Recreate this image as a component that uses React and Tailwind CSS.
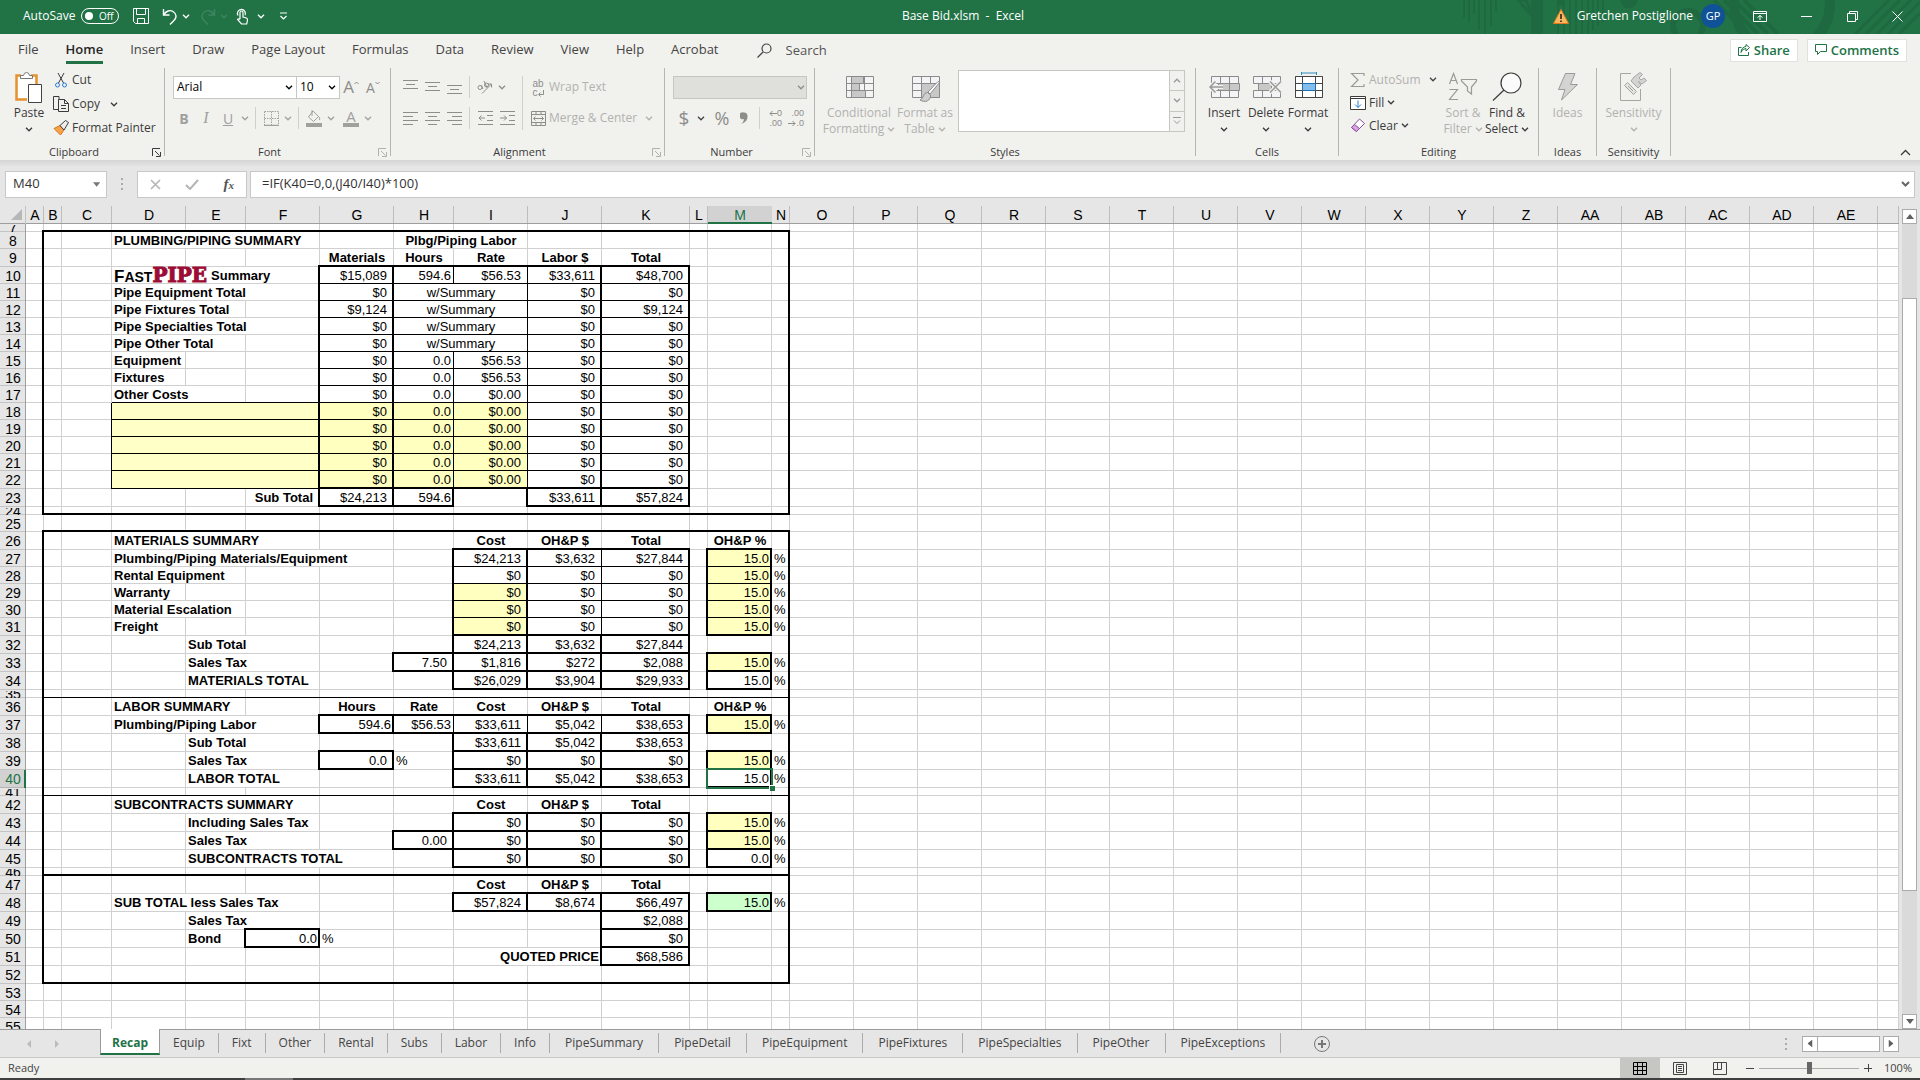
import React, { useState } from 'react'
import clsx from 'clsx'

const COLS = [
  ['A', 'w-[18px]'], ['B', 'w-[18px]'], ['C', 'w-[50px]'], ['D', 'w-[74px]'], ['E', 'w-[60px]'],
  ['F', 'w-[74px]'], ['G', 'w-[74px]'], ['H', 'w-[60px]'], ['I', 'w-[74px]'], ['J', 'w-[74px]'],
  ['K', 'w-[88px]'], ['L', 'w-[18px]'], ['M', 'w-[64px]'], ['N', 'w-[18px]'],
  ...['O', 'P', 'Q', 'R', 'S', 'T', 'U', 'V', 'W', 'X', 'Y', 'Z', 'AA', 'AB', 'AC', 'AD', 'AE'].map(c => [c, 'w-[64px]']),
  ['', ''],
]
const NAMES = COLS.map(c => c[0])
const col = name => NAMES.indexOf(name)

const FIRST_ROW = 7
const LAST_ROW = 55
const TALL = [9, 22, 23, 26, 31, 32, 33, 34, 36, 37, 38, 39, 40, 42, 43, 44, 45, 47, 48, 49, 50, 51, 52]
const TINY = [7, 24, 35, 41, 46]

// cell edges, key is right edge + bottom edge: n = none, g = grid line, t = thin, T = thick
const EDGES = {
  ng: 'shadow-[inset_0_-1px_0_#d0d0d0]',
  gg: 'shadow-[inset_-1px_-1px_0_#d0d0d0]',
  gt: 'shadow-[inset_0_-1px_0_#000,inset_-1px_0_0_#d0d0d0]',
  gT: 'shadow-[inset_0_-2px_0_#000,inset_-1px_0_0_#d0d0d0]',
  tg: 'shadow-[inset_-1px_0_0_#000,inset_0_-1px_0_#d0d0d0]',
  tt: 'shadow-[inset_-1px_-1px_0_#000]',
  tT: 'shadow-[inset_-1px_-2px_0_#000]',
  Tg: 'shadow-[inset_-2px_0_0_#000,inset_0_-1px_0_#d0d0d0]',
  Tt: 'shadow-[inset_-2px_-1px_0_#000]',
  TT: 'shadow-[inset_-2px_-2px_0_#000]',
}

const right = {}
const bottom = {}
const cells = {}

function vline(c, r1, r2, w){ for(let r = r1; r <= r2; r++) right[`${c}:${r}`] = w }
function hline(r, c1, c2, w){ for(let c = c1; c <= c2; c++) bottom[`${c}:${r}`] = w }
function box(a, r1, b, r2, w = 'T'){
  vline(col(a) - 1, r1, r2, w)
  vline(col(b), r1, r2, w)
  hline(r1 - 1, col(a), col(b), w)
  hline(r2, col(a), col(b), w)
}
function put(c, r, text, opts = {}){ cells[`${col(c)}:${r}`] = { text, ...opts } }

const label = (c, r, text, span = 1) => put(c, r, text, { span, bold: true, align: 'left' })
const head = (c, r, text, span = 1) => put(c, r, text, { span, bold: true, align: 'center' })
const money = (c, r, text, fill) => put(c, r, text, { align: 'money', fill })
const num = (c, r, text, fill) => put(c, r, text, { align: 'num', fill })

// outer frames
box('B', 8, 'N', 24)
box('B', 26, 'N', 52)
hline(35, col('B'), col('N'), 't')
hline(41, col('B'), col('N'), 't')
hline(46, col('B'), col('N'), 'T')

// plumbing / piping
for(let r = 10; r <= 21; r++) hline(r, col('G'), col('K'), 't')
vline(col('C'), 18, 22, 't')
for(let r = 17; r <= 22; r++) hline(r, col('D'), col('F'), 't')
box('G', 10, 'K', 22)
vline(col('H'), 10, 22, 't')
vline(col('I'), 10, 22, 't')
vline(col('G'), 10, 22, 'T')
vline(col('J'), 10, 22, 'T')
box('G', 23, 'H', 23)
vline(col('G'), 23, 23, 'T')
box('J', 23, 'K', 23)
vline(col('J'), 23, 23, 'T')
hline(22, col('I'), col('I'), 'T')

label('D', 8, 'PLUMBING/PIPING SUMMARY', 3)
head('H', 8, 'Plbg/Piping Labor', 2)
head('G', 9, 'Materials')
head('H', 9, 'Hours')
head('I', 9, 'Rate')
head('J', 9, 'Labor $')
head('K', 9, 'Total')
label('D', 10, <FastPipe />, 3)
label('D', 11, 'Pipe Equipment Total', 3)
label('D', 12, 'Pipe Fixtures Total', 2)
label('D', 13, 'Pipe Specialties Total', 3)
label('D', 14, 'Pipe Other Total', 2)
label('D', 15, 'Equipment')
label('D', 16, 'Fixtures')
label('D', 17, 'Other Costs', 2)
put('F', 23, 'Sub Total', { bold: true, align: 'money' })

const piping = [
  [10, '$15,089', '594.6', '$56.53', '$33,611', '$48,700'],
  [11, '$0', null, null, '$0', '$0'],
  [12, '$9,124', null, null, '$0', '$9,124'],
  [13, '$0', null, null, '$0', '$0'],
  [14, '$0', null, null, '$0', '$0'],
  [15, '$0', '0.0', '$56.53', '$0', '$0'],
  [16, '$0', '0.0', '$56.53', '$0', '$0'],
  [17, '$0', '0.0', '$0.00', '$0', '$0'],
  [18, '$0', '0.0', '$0.00', '$0', '$0'],
  [19, '$0', '0.0', '$0.00', '$0', '$0'],
  [20, '$0', '0.0', '$0.00', '$0', '$0'],
  [21, '$0', '0.0', '$0.00', '$0', '$0'],
  [22, '$0', '0.0', '$0.00', '$0', '$0'],
  [23, '$24,213', '594.6', '', '$33,611', '$57,824'],
]
piping.forEach(([r, g, h, i, j, k]) => {
  const fill = r >= 18 && r <= 22 ? 'yellow' : undefined
  money('G', r, g, fill)
  if(h === null) put('H', r, 'w/Summary', { span: 2, align: 'center' })
  else {
    num('H', r, h, fill)
    money('I', r, i, fill)
  }
  money('J', r, j)
  money('K', r, k)
  if(fill) put('D', r, '', { span: 3, fill: 'paleyellow' })
})

// cost blocks: I, J, K, then the OH&P % in M
for(let r = 27; r <= 31; r++){ hline(r, col('I'), col('K'), 't'); hline(r, col('M'), col('M'), 't') }
box('I', 27, 'K', 31)
vline(col('I'), 27, 31, 'T')
vline(col('J'), 27, 31, 't')
box('M', 27, 'M', 31)
;[32, 33, 34, 37, 38, 39, 40, 43, 44, 45, 48].forEach(r => { box('I', r, 'I', r); box('J', r, 'J', r); box('K', r, 'K', r) })
;[33, 34, 37, 39, 40, 43, 44, 45, 48].forEach(r => box('M', r, 'M', r))
;[49, 50, 51].forEach(r => box('K', r, 'K', r))
box('H', 33, 'H', 33)
box('G', 37, 'G', 37)
box('H', 37, 'H', 37)
vline(col('H'), 37, 37, 't')
vline(col('I'), 37, 37, 't')
vline(col('J'), 37, 37, 't')
box('G', 39, 'G', 39)
box('H', 44, 'H', 44)
box('F', 50, 'F', 50)
vline(col('E'), 49, 49, 'n')

const costs = [
  [27, '$24,213', '$3,632', '$27,844', '15.0'],
  [28, '$0', '$0', '$0', '15.0'],
  [29, '$0', '$0', '$0', '15.0'],
  [30, '$0', '$0', '$0', '15.0'],
  [31, '$0', '$0', '$0', '15.0'],
  [32, '$24,213', '$3,632', '$27,844'],
  [33, '$1,816', '$272', '$2,088', '15.0'],
  [34, '$26,029', '$3,904', '$29,933', '15.0'],
  [37, '$33,611', '$5,042', '$38,653', '15.0'],
  [38, '$33,611', '$5,042', '$38,653'],
  [39, '$0', '$0', '$0', '15.0'],
  [40, '$33,611', '$5,042', '$38,653', '15.0'],
  [43, '$0', '$0', '$0', '15.0'],
  [44, '$0', '$0', '$0', '15.0'],
  [45, '$0', '$0', '$0', '0.0'],
  [48, '$57,824', '$8,674', '$66,497', '15.0'],
]
costs.forEach(([r, cost, ohp, total, pct]) => {
  money('I', r, cost, r >= 29 && r <= 31 ? 'yellow' : undefined)
  money('J', r, ohp)
  money('K', r, total)
  if(pct){
    const plain = [34, 40, 45].includes(r)
    num('M', r, pct, plain ? undefined : r === 48 ? 'green' : 'yellow')
    put('N', r, '%', { align: 'left' })
  }
})
;[26, 36, 42, 47].forEach(r => { head('I', r, 'Cost'); head('J', r, 'OH&P $'); head('K', r, 'Total') })
head('M', 26, 'OH&P %')
head('M', 36, 'OH&P %')

label('D', 26, 'MATERIALS SUMMARY', 3)
label('D', 27, 'Plumbing/Piping Materials/Equipment', 4)
label('D', 28, 'Rental Equipment', 2)
label('D', 29, 'Warranty')
label('D', 30, 'Material Escalation', 2)
label('D', 31, 'Freight')
label('E', 32, 'Sub Total', 2)
label('E', 33, 'Sales Tax', 2)
label('E', 34, 'MATERIALS TOTAL', 2)
money('H', 33, '7.50')
label('D', 36, 'LABOR SUMMARY', 2)
head('G', 36, 'Hours')
head('H', 36, 'Rate')
label('D', 37, 'Plumbing/Piping Labor', 3)
num('G', 37, '594.6')
num('H', 37, '$56.53')
label('E', 38, 'Sub Total', 2)
label('E', 39, 'Sales Tax', 2)
money('G', 39, '0.0')
put('H', 39, '%', { align: 'left' })
label('E', 40, 'LABOR TOTAL', 2)
label('D', 42, 'SUBCONTRACTS SUMMARY', 3)
label('E', 43, 'Including Sales Tax', 2)
label('E', 44, 'Sales Tax', 2)
money('H', 44, '0.00')
label('E', 45, 'SUBCONTRACTS TOTAL', 3)
label('D', 48, 'SUB TOTAL less Sales Tax', 3)
label('E', 49, 'Sales Tax')
money('K', 49, '$2,088')
label('E', 50, 'Bond')
num('F', 50, '0.0')
put('G', 50, '%', { align: 'left' })
money('K', 50, '$0')
put('I', 51, 'QUOTED PRICE', { span: 2, bold: true, align: 'num' })
money('K', 51, '$68,586')

const ALIGN = {
  left: 'pl-[2px] text-left',
  center: 'text-center',
  money: 'pr-[7px] text-right',
  num: 'pr-[3px] text-right',
}
const FILL = { yellow: 'bg-[#ffffc0]', paleyellow: 'bg-[#ffffc8]', green: 'bg-[#ccffcc]' }

function FastPipe(){
  return (
    <span className="flex h-4 items-start gap-[4px]">
      <span className="flex items-baseline leading-[14px]">
        <span className="text-[17px]">F</span>
        <span className="text-[14px]">AST</span>
        <span className="font-['DejaVu_Serif',serif] text-[20px] font-black text-[#9c0c34] [-webkit-text-stroke:1px_#9c0c34]">PIPE</span>
      </span>
      <span>Summary</span>
    </span>
  )
}

function Cell({ r, c, data }){
  const last = c + (data?.span || 1) - 1
  const key = (right[`${last}:${r}`] || 'g') + (bottom[`${c}:${r}`] || 'g')
  const active = r === 40 && NAMES[c] === 'M'
  // a thick frame that starts below and to the right still needs its corner drawn here
  const corner = !key.includes('T') && right[`${last}:${r + 1}`] === 'T' && bottom[`${last + 1}:${r}`] === 'T'
  return (
    <td
      colSpan={data?.span || 1}
      className={clsx('p-0 whitespace-nowrap', EDGES[key], data?.bold && 'font-bold', ALIGN[data?.align], FILL[data?.fill], (active || corner) && 'relative')}
    >
      {data?.text}
      {corner && <span className="absolute right-0 bottom-0 h-[2px] w-[2px] bg-black" />}
      {active && (
        <span className="absolute -top-[2px] -right-[1px] -bottom-[1px] -left-[2px] border-2 border-[#217346]">
          <span className="absolute -right-[4px] -bottom-[4px] h-[6px] w-[6px] border-t border-l border-white bg-[#217346]" />
        </span>
      )}
    </td>
  )
}

function SheetRow({ r }){
  const tiny = TINY.includes(r)
  const height = tiny ? 'h-2' : TALL.includes(r) ? 'h-[18px]' : 'h-[17px]'
  const tds = []
  for(let c = 0; c < COLS.length;){
    const data = cells[`${c}:${r}`]
    tds.push(<Cell key={c} r={r} c={c} data={data} />)
    c += data?.span || 1
  }
  return (
    <tr className={clsx(height, tiny ? 'text-[1px] leading-[1px]' : 'leading-4')}>
      <th
        scope="row"
        className={clsx('p-0 text-[14px] font-normal',
          r === 40 ? 'bg-[#d2d2d2] text-[#217346] shadow-[inset_-2px_0_0_#217346,inset_0_-1px_0_#b4b4b4]' : 'bg-[#e6e6e6] shadow-[inset_-1px_0_0_#9e9e9e,inset_0_-1px_0_#c4c4c4]')}
      >
        <div className={clsx('flex items-center justify-center overflow-hidden', tiny ? 'h-[7px] leading-[7px]' : 'h-4 leading-4')}>{r}</div>
      </th>
      {tds}
    </tr>
  )
}

function Sheet(){
  const rows = []
  for(let r = FIRST_ROW; r <= LAST_ROW; r++) rows.push(r)
  return (
    <table className="w-full table-fixed border-separate border-spacing-0 bg-white font-['Liberation_Sans',sans-serif] text-[13px] text-black">
      <colgroup>
        <col className="w-[26px]" />
        {COLS.map(([name, w], i) => <col key={i} className={w} />)}
      </colgroup>
      <thead>
        <tr className="h-[18px] bg-[#e6e6e6] text-[14px] leading-4">
          <th className="p-0 shadow-[inset_-1px_0_0_#c4c4c4,inset_0_-1px_0_#9e9e9e]">
            <svg width="12" height="12" viewBox="0 0 12 12" className="ml-auto mr-[3px]"><path d="M11 0V11H0Z" fill="#b7b7b7" /></svg>
          </th>
          {COLS.map(([name], i) => (
            <th
              key={i}
              scope="col"
              className={clsx('p-0 text-center font-normal',
                name === 'M' ? 'bg-[#d2d2d2] text-[#217346] shadow-[inset_0_-2px_0_#217346]' : 'shadow-[inset_0_-1px_0_#9e9e9e,inset_-1px_0_0_#bdbdbd]')}
            >
              {name}
            </th>
          ))}
        </tr>
      </thead>
      <tbody>
        {rows.map(r => <SheetRow key={r} r={r} />)}
      </tbody>
    </table>
  )
}

function Chevron({ className }){
  return (
    <svg width="8" height="5" viewBox="0 0 8 5" className={clsx('shrink-0', className)} fill="none" stroke="currentColor" strokeWidth="1.3">
      <path d="M1 0.8L4 3.8L7 0.8" />
    </svg>
  )
}

function Svg({ w = 16, h = 16, className, children, ...rest }){
  return (
    <svg width={w} height={h} viewBox={`0 0 ${w} ${h}`} className={clsx('shrink-0', className)} fill="none" stroke="currentColor" strokeWidth="1" {...rest}>
      {children}
    </svg>
  )
}

function IconButton({ label, className, children }){
  return (
    <button aria-label={label} className={clsx('flex h-[22px] w-[22px] items-center justify-center', className)}>{children}</button>
  )
}

function Drop({ label, className }){
  return <IconButton label={label} className={clsx('!w-3', className)}><Chevron /></IconButton>
}

function BigButton({ icon, lines, drop, off, className }){
  return (
    <button className={clsx('flex flex-col items-center pt-[4px] leading-4', off && 'text-[#b1b1ae]', className)}>
      <span className="flex h-[33px] items-start justify-center">{icon}</span>
      <span className="whitespace-nowrap">{lines[0]}</span>
      <span className="flex h-4 items-center gap-[3px] whitespace-nowrap">{lines[1]}{drop && <Chevron />}</span>
    </button>
  )
}

function Group({ title, className, launcher, off, children }){
  return (
    <section className={clsx('flex h-[88px] shrink-0 flex-col border-r border-[#b5b5b2]', className)}>
      <div className="flex h-[76px] shrink-0">{children}</div>
      <div className={clsx('relative h-3 text-center text-[11px] leading-4', launcher && 'pr-4')}>
        {title}
        {launcher && (
          <button aria-label={`${title} settings`} className={clsx('absolute top-[4px] right-[3px]', off && 'text-[#b1b1ae]')}>
            <Svg w={9} h={9}><path d="M0.5 8V0.5H8M3 3L7.5 7.5M8.5 4V8.5H4" /></Svg>
          </button>
        )}
      </div>
    </section>
  )
}

const Sep = () => <span className="mx-[4px] h-[22px] w-px bg-[#cfcfcc]" />

function Lines({ rows }){
  return <Svg w={15} h={14}>{rows.map(([x, y, w]) => <path key={y} d={`M${x} ${y + 0.5}h${w}`} />)}</Svg>
}

function GridIcon({ kind }){
  return (
    <Svg w={32} h={32} stroke="#8b8b8b">
      {kind !== 'delete' && <path d="M3.5 4.5H30.5V25.5H3.5Z" fill="#f4f4f6" />}
      {kind === 'format' && <path d="M3.5 4.5H30.5V25.5H3.5ZM3.5 11.5H30.5M3.5 18.5H30.5M10.5 4.5V25.5M23.5 4.5V25.5" stroke="#444" fill="#fff" />}
      {kind === 'format' && <path d="M10.5 11.5H23.5V18.5H10.5Z" fill="#83beec" stroke="#1e6fb0" />}
      {kind === 'format' && <path d="M9.5 1H24.5M9.5 -1V3M24.5 -1V3" stroke="#2a8dc0" />}
      {kind !== 'format' && kind !== 'delete' && <path d="M3.5 11.5H30.5M3.5 18.5H30.5M12.5 4.5V25.5M21.5 4.5V25.5" />}
      {kind === 'cond' && <path d="M8.5 4.5H20.5V11.5H8.5ZM8.5 11.5H16.5V18.5H8.5ZM8.5 18.5H22.5V25.5H8.5Z" fill="#c8c8c8" />}
      {kind === 'insert' && <path d="M10.5 11.5H31.5V18.5H10.5ZM21.5 11.5V18.5" fill="#c8c8c8" />}
      {kind === 'insert' && <path d="M15 15H2M7.5 9.5L2 15L7.5 20.5" stroke="#f1f1ee" strokeWidth="4" />}
      {kind === 'insert' && <path d="M15 15H2M7.5 9.5L2 15L7.5 20.5" stroke="#9a9a9a" strokeWidth="1.5" />}
      {kind === 'delete' && <path d="M3.5 4.5H30.5V11.5H3.5ZM3.5 18.5H30.5V25.5H3.5ZM12.5 4.5V11.5M21.5 4.5V11.5M12.5 18.5V25.5M21.5 18.5V25.5" fill="#f4f4f6" />}
      {kind === 'delete' && <path d="M8.5 11.5H21.5V18.5H8.5Z" fill="#c8c8c8" />}
      {kind === 'delete' && <path d="M20 9.5L31 20.5M31 9.5L20 20.5" stroke="#f1f1ee" strokeWidth="4" />}
      {kind === 'delete' && <path d="M20 9.5L31 20.5M31 9.5L20 20.5" stroke="#9a9a9a" strokeWidth="1.5" />}
      {kind === 'table' && <path d="M12.5 11.5H30.5V25.5H12.5Z" fill="#c8c8c8" />}
      {kind === 'table' && <path d="M31 10L21 22L19 20L29 9.5Z" fill="#fff" />}
      {kind === 'table' && <path d="M18.5 20.5C14 21 15 26 11 28C16 31 22 29 21.5 23Z" fill="#d0d0d0" />}
    </Svg>
  )
}

function TitleBar(){
  return (
    <header className="relative flex h-[34px] shrink-0 items-center bg-[#217346] pb-[2px] text-[12px] text-white">
      <svg width="460" height="34" viewBox="0 0 460 34" className="absolute top-0 right-0" fill="none" stroke="#1f6940">
        <path d="M4 0V18M9 0V22M14 0V14M19 0V30M25 0V34M31 0V26M36 0V12" strokeWidth="2" />
        <path d="M58 0L74 18L66 0Z" strokeWidth="3" />
        <path d="M74 0V34M80 0V34M100 0V6" strokeWidth="6" />
        <path d="M98 0V34M104 0V34M110 0V34M116 0V34M122 0V34M128 0V34M133 0V30M138 0V26M143 0V22" strokeWidth="2" />
        <circle cx="169" cy="0" r="8" fill="#1f6940" />
        <circle cx="228" cy="26" r="15" strokeWidth="6" />
        <path d="M254 0L288 34M264 0L298 34M274 0L308 34M284 0L318 34" strokeWidth="4" />
        <circle cx="322" cy="4" r="48" strokeWidth="10" />
        <path d="M395 34L429 0M406 34L440 0M417 34L451 0M428 34L460 2M439 34L460 13" strokeWidth="3" />
      </svg>
      <div className="relative flex flex-1 items-center pl-[23px]">
        <label htmlFor="autosave">AutoSave</label>
        <span className="relative ml-[6px] flex h-4 w-[38px] items-center justify-end rounded-full border border-white pr-[5px] text-[10px] leading-3">
          <input id="autosave" type="checkbox" className="absolute inset-0 m-0 h-full w-full appearance-none" />
          <span className="absolute left-[3px] h-2 w-2 rounded-full bg-white" />
          Off
        </span>
        <button aria-label="Save" className="ml-[14px]">
          <Svg w={16} h={16}><path d="M0.5 0.5H15.5V15.5H2.5L0.5 13.5ZM3.5 0.5V6.5H12.5V0.5M4.5 15.5V10.5H11.5V15.5" /></Svg>
        </button>
        <button aria-label="Undo" className="ml-[13px] flex items-center gap-[4px]">
          <Svg w={16} h={17} strokeWidth="1.4"><path d="M1.5 1V7H7.5M1.5 7C4 3 8 1.5 11 3.5C15 6 15 10 11.5 13L8 16.5" /></Svg>
          <Chevron />
        </button>
        <button aria-label="Redo" className="ml-[10px] flex items-center gap-[4px] text-[#3f8560]">
          <Svg w={16} h={17} strokeWidth="1.4"><path d="M14.5 1V7H8.5M14.5 7C12 3 8 1.5 5 3.5C1 6 1 10 4.5 13L8 16.5" /></Svg>
          <Chevron />
        </button>
        <button aria-label="Touch/Mouse Mode" className="ml-[7px] flex items-center gap-[8px]">
          <Svg w={14} h={17} strokeWidth="1.2"><path d="M5 11V4.5a1.5 1.5 0 0 1 3 0V9l3.5 1q1 .5 1 2l-.8 4H6.5L2.5 11.5q1-1.5 2.5 0M3 7.500a4 4 0 1 1 7-.2" /></Svg>
          <Chevron />
        </button>
        <button aria-label="Customize Quick Access Toolbar" className="ml-[14px]">
          <Svg w={9} h={8} strokeWidth="1.2"><path d="M1 1H8M1.5 4L4.5 7L7.5 4" /></Svg>
        </button>
      </div>
      <h1 className="relative whitespace-pre">Base Bid.xlsm  -  Excel</h1>
      <div className="relative flex flex-1 items-center justify-end pr-[17px]">
        <svg width="16" height="15" viewBox="0 0 16 15"><path d="M8 0.5L15.5 14.5H0.5Z" fill="#f7b95f" stroke="#e27a1c" /><path d="M8 5V10M8 11.5V13" stroke="#222" strokeWidth="1.6" /></svg>
        <span className="ml-[8px]">Gretchen Postiglione</span>
        <span className="ml-[8px] flex h-6 w-6 items-center justify-center rounded-full bg-[#0f5298] text-[11px]">GP</span>
        <button aria-label="Ribbon Display Options" className="ml-[28px]">
          <Svg w={14} h={11}><path d="M0.5 0.5H13.5V10.5H0.5ZM0.5 2.5H13.5M7 9V4.5M4.5 6.5L7 4.5L9.5 6.5" /></Svg>
        </button>
        <button aria-label="Minimize" className="ml-[34px]"><Svg w={11} h={11}><path d="M0 5.5H11" /></Svg></button>
        <button aria-label="Restore Down" className="ml-[35px]">
          <Svg w={11} h={11}><path d="M0.5 2.5H8.5V10.5H0.5ZM2.5 2.5V0.5H10.5V8.5H8.5" /></Svg>
        </button>
        <button aria-label="Close" className="ml-[34px]"><Svg w={11} h={11}><path d="M0.5 0.5L10.5 10.5M10.5 0.5L0.5 10.5" /></Svg></button>
      </div>
    </header>
  )
}

const TABS = ['File', 'Home', 'Insert', 'Draw', 'Page Layout', 'Formulas', 'Data', 'Review', 'View', 'Help', 'Acrobat']

function RibbonTabs(){
  return (
    <nav className="flex h-[32px] shrink-0 items-center pr-[13px] pl-[18px] text-[13px] leading-5 text-[#444]">
      <div className="flex gap-[27px]">
        {TABS.map(t => (
          <button key={t} className={clsx('h-[27px] border-b-[3px]', t === 'Home' ? 'border-[#217346] font-semibold text-[#262626]' : 'border-transparent')}>{t}</button>
        ))}
      </div>
      <label className="ml-[38px] flex items-center gap-[14px]">
        <Svg w={15} h={15} strokeWidth="1.2"><circle cx="9.5" cy="5.5" r="4.5" /><path d="M6 9L0.5 14.5" /></Svg>
        <input type="text" placeholder="Search" className="w-20 bg-transparent outline-none placeholder:text-[#555]" />
      </label>
      <div className="ml-auto flex gap-[9px] font-semibold text-[#217346]">
        <button className="flex h-[23px] items-center gap-[4px] border border-[#e1e1de] bg-white px-[7px]">
          <Svg w={12} h={12}><path d="M3.5 3.5H0.5V11.5H10.5V8M3 8.5Q4 4.5 8 4.5V7L11.5 3.5L8 0.5V2.5Q3.5 3 3 8.5Z" /></Svg>
          Share
        </button>
        <button className="flex h-[23px] items-center gap-[4px] border border-[#e1e1de] bg-white px-[7px]">
          <Svg w={12} h={12}><path d="M0.5 0.5H11.5V7.5H5.5L2.5 10.5V7.5H0.5Z" /></Svg>
          Comments
        </button>
      </div>
    </nav>
  )
}

function Ribbon(){
  const [font, setFont] = useState('Arial')
  const [size, setSize] = useState('10')
  return (
    <div className="relative flex h-[94px] shrink-0 pt-[2px] text-[12px] text-[#3b3b3b]">
      <Group title="Clipboard" className="w-[165px]" launcher>
        <BigButton
          className="ml-[10px] w-[38px]"
          lines={['Paste', '']}
          drop
          icon={
            <Svg w={28} h={31}>
              <path d="M6 3.5H1.5V27.5H12" stroke="#e8912d" strokeWidth="2.5" />
              <path d="M16 3.5H21.5V12" stroke="#e8912d" strokeWidth="2.5" />
              <path d="M3 5H20V26H3Z" fill="#fff" stroke="none" />
              <path d="M5.5 6.5V3.5H8.5Q9 0.5 11.5 0.5T14.5 3.5H17.5V6.5Z" fill="#fff" stroke="#777" />
              <path d="M13.5 12.5H26.5V30.5H13.5Z" fill="#fff" stroke="#444" />
            </Svg>
          }
        />
        <div className="ml-[5px] flex flex-col">
          <button className="flex h-6 items-center gap-[3px]">
            <Svg w={16} h={16}><path d="M5 1L10.5 11M11 1L5.5 11" /><circle cx="4.5" cy="13" r="2" stroke="#2b7cd3" /><circle cx="11.5" cy="13" r="2" stroke="#2b7cd3" /></Svg>
            Cut
          </button>
          <div className="flex h-6 items-center gap-[8px]">
            <button className="flex items-center gap-[3px]">
              <Svg w={16} h={16}><path d="M6 3.5V0.5H0.5V13.5H5M5.5 3.5H11.5L15.5 7.5V15.5H5.5ZM11.5 3.5V7.5H15.5M8 9.5H13M8 12.5H13" /></Svg>
              Copy
            </button>
            <Drop label="Copy options" />
          </div>
          <button className="flex h-6 items-center gap-[3px] whitespace-nowrap">
            <Svg w={16} h={16}><path d="M1 8.5L7 5.5L11 10L7.5 15Z" fill="#f5a34c" stroke="#d9731a" /><path d="M7 5.5L12.5 0.5L15.5 2.5L11 10Z" fill="#eee" /></Svg>
            Format Painter
          </button>
        </div>
      </Group>

      <Group title="Font" className="w-[226px]" launcher off>
        <div className="flex flex-col gap-[9px] pt-2 pl-2">
          <div className="flex h-[22px] items-center text-black">
            <span className="relative flex items-center">
              <select aria-label="Font" value={font} onChange={e => setFont(e.target.value)} className="h-[23px] w-[124px] appearance-none border border-[#c6c6c3] bg-white pl-[3px]">
                <option>Arial</option>
              </select>
              <Chevron className="pointer-events-none absolute right-[4px]" />
            </span>
            <span className="relative -ml-px flex items-center">
              <select aria-label="Font size" value={size} onChange={e => setSize(e.target.value)} className="h-[23px] w-[44px] appearance-none border border-[#c6c6c3] bg-white pl-[3px]">
                <option>10</option>
              </select>
              <Chevron className="pointer-events-none absolute right-[4px]" />
            </span>
            <IconButton label="Increase Font Size" className="text-[17px] text-[#8d8d8a]">A<Svg w={5} h={4} className="mb-2"><path d="M0.5 3L2.5 1L4.5 3" /></Svg></IconButton>
            <IconButton label="Decrease Font Size" className="text-[14px] text-[#8d8d8a]">A<Svg w={5} h={4} className="mb-2"><path d="M0.5 1L2.5 3L4.5 1" /></Svg></IconButton>
          </div>
          <div className="flex h-[22px] items-center text-[14px] text-[#a0a09d]">
            <IconButton label="Bold" className="font-bold">B</IconButton>
            <IconButton label="Italic" className="font-['Liberation_Serif',serif] text-[16px] italic">I</IconButton>
            <IconButton label="Underline" className="underline">U</IconButton>
            <Drop label="Underline options" />
            <Sep />
            <IconButton label="Borders">
              <Svg w={15} h={15}><path d="M0.5 0.5H14.5V14.5M0.5 0.5V14.5M7.5 0.5V14.5M0.5 7.5H14.5" strokeDasharray="1.5 1" /><path d="M0 14.5H15" strokeWidth="1.5" /></Svg>
            </IconButton>
            <Drop label="Border options" />
            <Sep />
            <IconButton label="Fill Color">
              <Svg w={16} h={17}><path d="M7 1L12.5 6.5L7.5 11.5L2.5 7ZM6 0V6M12.5 6.5Q14.5 8 13.5 10" /><path d="M0 15H16" strokeWidth="4" /></Svg>
            </IconButton>
            <Drop label="Fill options" />
            <IconButton label="Font Color" className="ml-[3px] flex-col text-[15px] leading-3">A<span className="mt-px h-[4px] w-4 bg-current" /></IconButton>
            <Drop label="Font color options" />
          </div>
        </div>
      </Group>

      <Group title="Alignment" className="w-[274px]" launcher off>
        <div className="flex flex-col gap-[9px] pt-2 pl-2 text-[#8d8d8a]">
          <div className="flex h-[22px] items-center">
            <IconButton label="Top Align"><Lines rows={[[0, 0, 15], [3, 4, 9], [0, 8, 15]]} /></IconButton>
            <IconButton label="Middle Align"><Lines rows={[[0, 2, 15], [3, 6, 9], [0, 10, 15]]} /></IconButton>
            <IconButton label="Bottom Align"><Lines rows={[[0, 5, 15], [3, 9, 9], [0, 13, 15]]} /></IconButton>
            <Sep />
            <IconButton label="Orientation">
              <Svg w={16} h={14}><circle cx="3" cy="7.5" r="2" /><path d="M4.5 5.5L6 9M7 1L10 7.5" /><circle cx="9.5" cy="5" r="2" /><path d="M5 13.5L14.5 4M11 4H14.5V7.5" /></Svg>
            </IconButton>
            <Drop label="Orientation options" />
          </div>
          <div className="flex h-[22px] items-center">
            <IconButton label="Align Left"><Lines rows={[[0, 1, 15], [0, 5, 10], [0, 9, 15], [0, 13, 10]]} /></IconButton>
            <IconButton label="Center"><Lines rows={[[0, 1, 15], [3, 5, 9], [0, 9, 15], [3, 13, 9]]} /></IconButton>
            <IconButton label="Align Right"><Lines rows={[[0, 1, 15], [5, 5, 10], [0, 9, 15], [5, 13, 10]]} /></IconButton>
            <Sep />
            <IconButton label="Decrease Indent"><Svg w={15} h={14}><path d="M0 0.5H15M0 13.5H15M9 4.5H15M9 9.5H15M7 7H1M3.5 4.5L1 7L3.5 9.5" /></Svg></IconButton>
            <IconButton label="Increase Indent"><Svg w={15} h={14}><path d="M0 0.5H15M0 13.5H15M9 4.5H15M9 9.5H15M0 7H6.5M4 4.5L6.5 7L4 9.5" /></Svg></IconButton>
          </div>
        </div>
        <span className="mx-[4px] mt-2 h-[54px] w-px bg-[#cfcfcc]" />
        <div className="flex flex-col gap-[9px] pt-2 text-[#b1b1ae]">
          <button className="flex h-[22px] items-center whitespace-nowrap">
            <span className="flex w-[22px] flex-col items-center font-['Liberation_Sans',sans-serif] text-[10px] leading-[12px] text-[#8d8d8a]">
              <span>ab</span>
              <span className="flex h-[7px] items-center">c<Svg w={6} h={7}><path d="M5.5 0V4.5H1M2.5 2.5L0.5 4.5L2.5 6.5" /></Svg></span>
            </span>
            Wrap Text
          </button>
          <div className="flex h-[22px] items-center gap-[6px]">
            <button className="flex items-center whitespace-nowrap">
              <span className="flex w-[22px] justify-center text-[#8d8d8a]">
                <Svg w={15} h={15}><path d="M0.5 0.5H14.5V14.5H0.5ZM0.5 3.5H14.5M0.5 11.5H14.5M5 0.5V3.5M10 0.5V3.5M5 11.5V14.5M10 11.5V14.5M2.5 7.5H12.5M4.5 5.5L2.5 7.5L4.5 9.5M10.5 5.5L12.5 7.5L10.5 9.5" /></Svg>
              </span>
              Merge &amp; Center
            </button>
            <Drop label="Merge options" />
          </div>
        </div>
      </Group>

      <Group title="Number" className="w-[150px]" launcher off>
        <div className="flex flex-col gap-[9px] pt-2 pl-2 text-[#8d8d8a]">
          <span className="relative flex h-[22px] items-center">
            <select aria-label="Number Format" className="h-[23px] w-[134px] appearance-none border border-[#c6c6c3] bg-[#dfdfdc]"><option></option></select>
            <Chevron className="pointer-events-none absolute right-[3px]" />
          </span>
          <div className="flex h-[22px] items-center">
            <IconButton label="Accounting Number Format" className="text-[19px]">$</IconButton>
            <Drop label="Accounting options" className="text-[#444]" />
            <IconButton label="Percent Style" className="ml-[4px] text-[18px]">%</IconButton>
            <IconButton label="Comma Style"><Svg w={8} h={13}><path d="M4 0.5A3.5 3.5 0 1 0 4 7Q4 10 1 12Q8 10 7.5 4A3.5 3.5 0 0 0 4 0.5Z" fill="currentColor" stroke="none" /></Svg></IconButton>
            <Sep />
            <IconButton label="Increase Decimal" className="flex-col items-end pr-[4px] font-['Liberation_Sans',sans-serif] text-[9px] leading-[10px]">
              <span className="flex items-center"><Svg w={8} h={7}><path d="M8 3.5H1M3.5 1L1 3.5L3.5 6" /></Svg>0</span>
              <span>.00</span>
            </IconButton>
            <IconButton label="Decrease Decimal" className="flex-col items-end pr-[4px] font-['Liberation_Sans',sans-serif] text-[9px] leading-[10px]">
              <span>.00</span>
              <span className="flex items-center"><Svg w={8} h={7}><path d="M0 3.5H7M4.5 1L7 3.5L4.5 6" /></Svg>.0</span>
            </IconButton>
          </div>
        </div>
      </Group>

      <Group title="Styles" className="w-[381px]">
        <BigButton className="ml-[11px] w-[66px]" off drop lines={['Conditional', 'Formatting']} icon={<GridIcon kind="cond" />} />
        <BigButton className="w-[66px]" off drop lines={['Format as', 'Table']} icon={<GridIcon kind="table" />} />
        <div className="mt-[2px] mr-[10px] flex h-[62px] flex-1 border border-[#c6c6c3] bg-white">
          <div className="ml-auto flex w-[15px] flex-col divide-y divide-[#c6c6c3] border-l border-[#c6c6c3] bg-[#f1f1ee] text-[#999]">
            <button aria-label="Previous row of styles" className="flex flex-1 items-center justify-center"><Chevron className="rotate-180" /></button>
            <button aria-label="Next row of styles" className="flex flex-1 items-center justify-center"><Chevron /></button>
            <button aria-label="More styles" className="flex flex-1 items-center justify-center"><Svg w={8} h={8}><path d="M0 0.5H8M1 3.5L4 6.5L7 3.5" /></Svg></button>
          </div>
        </div>
      </Group>

      <Group title="Cells" className="w-[143px]">
        <BigButton className="ml-[7px] w-[42px]" drop lines={['Insert', '']} icon={<GridIcon kind="insert" />} />
        <BigButton className="w-[42px]" drop lines={['Delete', '']} icon={<GridIcon kind="delete" />} />
        <BigButton className="w-[42px]" drop lines={['Format', '']} icon={<GridIcon kind="format" />} />
      </Group>

      <Group title="Editing" className="w-[200px]">
        <div className="ml-[11px] flex w-[91px] flex-col">
          <div className="flex h-[23px] items-center text-[#b1b1ae]">
            <button className="flex items-center gap-[3px]">
              <Svg w={16} h={14} strokeWidth="1.2" stroke="#9a9a97"><path d="M14 3V0.5H1.5L8 7L1.5 13.5H14V11" /></Svg>
              AutoSum
            </button>
            <Drop label="AutoSum options" className="mr-[2px] ml-auto text-[#444]" />
          </div>
          <button className="flex h-[23px] items-center gap-[3px]">
            <Svg w={16} h={14}><path d="M0.5 0.5H15.5V13.5H0.5ZM0.5 2.5H15.5" fill="#fff" /><path d="M8 4.5V11.5M5 8.5L8 11.5L11 8.5" stroke="#2b7cd3" /></Svg>
            Fill <Chevron />
          </button>
          <button className="flex h-[23px] items-center gap-[3px]">
            <Svg w={16} h={15} stroke="#8b4a9c"><path d="M1.5 9.5L9.5 1L14.5 5.5L6.5 13.5Z" fill="#fff" /><path d="M1.5 9.5L4.5 6.5L9.5 10.5L6.5 13.5Z" fill="#d9a5e3" /></Svg>
            Clear <Chevron />
          </button>
        </div>
        <BigButton
          className="w-[44px]"
          off
          drop
          lines={['Sort &', 'Filter']}
          icon={
            <Svg w={30} h={30} stroke="#9a9a97" strokeWidth="1.2">
              <path d="M1.5 12L5.5 1.5L9.5 12M3 8.5H8M1.5 17.5H9.5L1.5 27.5H10" />
              <path d="M13.5 7.5H28.5V9L23.5 15V22L19.5 19V15L13.5 9Z" />
            </Svg>
          }
        />
        <BigButton
          className="w-[44px]"
          drop
          lines={['Find &', 'Select']}
          icon={<Svg w={30} h={30} strokeWidth="1.2"><circle cx="19" cy="11" r="10" fill="#fbfbfb" /><path d="M12 18L1 28.5" /></Svg>}
        />
      </Group>

      <Group title="Ideas" className="w-[58px]">
        <BigButton
          className="w-full"
          off
          lines={['Ideas', '']}
          icon={<Svg w={24} h={30} stroke="#9a9a97"><path d="M9.5 1.5H19L14.5 12.5H21.5L5.5 28L9 17.5H2.5Z" fill="#d4d4d2" /></Svg>}
        />
      </Group>

      <Group title="Sensitivity" className="w-[74px]">
        <BigButton
          className="w-full"
          off
          drop
          lines={['Sensitivity', '']}
          icon={
            <Svg w={28} h={30} stroke="#a5a5a2">
              <path d="M20.5 17V28.5H0.5V1.5H11" />
              <path d="M4.5 13.5L7.5 10.5L16.5 19.5L13.5 22.5ZM8 14L13 19" fill="#e2e2e0" />
              <path d="M11 9L18 16L21 13L18.5 9.5L22 12L26.5 8.5L24 6L21 8L19 6L22.5 2.5L20 0.5L14 5Z" fill="#d4d4d2" />
            </Svg>
          }
        />
      </Group>

      <button aria-label="Collapse the Ribbon" className="mt-auto mr-[9px] mb-[4px] ml-auto">
        <Svg w={11} h={7} strokeWidth="1.3"><path d="M1 6L5.5 1.5L10 6" /></Svg>
      </button>
    </div>
  )
}

function FormulaBar(){
  return (
    <div className="flex h-[46px] shrink-0 items-center bg-gradient-to-b from-[#d4d4d4] to-[#e6e6e6] to-15% pt-[2px] pr-[5px] pl-[5px] text-[13px] text-[#333]">
      <div className="flex h-[27px] w-[102px] items-center border border-[#c8c8c8] bg-white pr-[6px]">
        <input aria-label="Name Box" defaultValue="M40" className="w-full min-w-0 bg-transparent pl-[7px] outline-none" />
        <svg width="8" height="5" viewBox="0 0 8 5"><path d="M0 0H8L4 5Z" fill="#777" /></svg>
      </div>
      <svg width="2" height="12" viewBox="0 0 2 12" className="mx-[14px]"><path d="M0 0H2V2H0ZM0 5H2V7H0ZM0 10H2V12H0Z" fill="#aaa" /></svg>
      <div className="flex h-[27px] w-[110px] items-center justify-around border border-[#c8c8c8] bg-white text-[#b5b5b5]">
        <button aria-label="Cancel"><Svg w={11} h={11} strokeWidth="1.6"><path d="M1 1L10 10M10 1L1 10" /></Svg></button>
        <button aria-label="Enter"><Svg w={14} h={11} strokeWidth="2"><path d="M1 6L5 10L13 1" /></Svg></button>
        <button aria-label="Insert Function" className="font-['Liberation_Serif',serif] text-[15px] leading-4 font-bold text-[#555] italic">f<span className="text-[11px]">x</span></button>
      </div>
      <div className="ml-[3px] flex h-[27px] flex-1 items-center border border-[#c8c8c8] bg-white pr-[4px]">
        <input aria-label="Formula Bar" defaultValue="=IF(K40=0,0,(J40/I40)*100)" className="w-full bg-transparent pl-[11px] outline-none" />
        <button aria-label="Expand Formula Bar"><Svg w={9} h={6} strokeWidth="2" stroke="#666"><path d="M1 1L4.5 4.5L8 1" /></Svg></button>
      </div>
    </div>
  )
}

function Arrow({ className }){
  return <svg width="8" height="5" viewBox="0 0 8 5" className={clsx('shrink-0', className)}><path d="M0 5H8L4 0Z" fill="#606060" /></svg>
}

const SHEETS = ['Equip', 'Fixt', 'Other', 'Rental', 'Subs', 'Labor', 'Info', 'PipeSummary', 'PipeDetail', 'PipeEquipment', 'PipeFixtures', 'PipeSpecialties', 'PipeOther', 'PipeExceptions']

function SheetTabs(){
  return (
    <div className="flex h-[28px] shrink-0 items-start border-t border-[#9b9b9b] bg-[#e6e6e6] text-[12px] leading-5 text-[#444]">
      <div className="flex w-[100px] gap-[24px] self-center pl-[27px]">
        <button aria-label="Previous sheet"><svg width="4" height="8" viewBox="0 0 4 8"><path d="M4 0V8L0 4Z" fill="#bbb" /></svg></button>
        <button aria-label="Next sheet"><svg width="4" height="8" viewBox="0 0 4 8"><path d="M0 0V8L4 4Z" fill="#bbb" /></svg></button>
      </div>
      <button className="-mt-px h-[26px] border-x border-b-2 border-x-[#9b9b9b] border-b-[#217346] bg-white px-[11px] pt-[3px] text-[12px] font-bold text-[#217346]">Recap</button>
      {SHEETS.map(s => <button key={s} className={clsx('mt-[3px] h-5 border-r border-[#ababab]', s.startsWith('Pipe') ? 'px-[15px]' : 'px-[13px]')}>{s}</button>)}
      <button aria-label="New sheet" className="ml-[33px] self-center text-[#777]"><Svg w={16} h={16}><circle cx="8" cy="8" r="7.5" /><path d="M8 4V12M4 8H12" strokeWidth="2" /></Svg></button>
      <svg width="2" height="12" viewBox="0 0 2 12" className="mr-[15px] ml-auto self-center"><path d="M0 0H2V2H0ZM0 5H2V7H0ZM0 10H2V12H0Z" fill="#aaa" /></svg>
      <div className="mr-[21px] flex h-[16px] self-center">
        <button aria-label="Scroll left" className="flex w-4 items-center justify-center border border-[#ababab] bg-white"><Arrow className="-rotate-90" /></button>
        <span className="-ml-px w-[63px] border border-[#ababab] bg-white" />
        <button aria-label="Scroll right" className="ml-[3px] flex w-4 items-center justify-center border border-[#ababab] bg-white"><Arrow className="rotate-90" /></button>
      </div>
    </div>
  )
}

function StatusBar(){
  return (
    <footer className="flex h-[21px] shrink-0 items-center border-t border-[#c9c9c6] bg-[#f1f1ee] pr-[8px] pl-[8px] text-[11px] text-[#444]">
      <span>Ready</span>
      <div className="ml-auto flex h-full items-center">
        <button aria-label="Normal" className="flex h-full w-[40px] items-center justify-center bg-[#c6c6c3] text-black"><Svg w={14} h={13}><path d="M0.5 0.5H13.5V12.5H0.5ZM0.5 4.5H13.5M0.5 8.5H13.5M4.5 0.5V12.5M9.5 0.5V12.5" /></Svg></button>
        <button aria-label="Page Layout" className="flex h-full w-[40px] items-center justify-center"><Svg w={14} h={13}><path d="M0.5 0.5H13.5V12.5H0.5ZM3.5 2.5H10.5V10.5H3.5ZM5 4.5H9M5 6.5H9M5 8.5H9" /></Svg></button>
        <button aria-label="Page Break Preview" className="flex h-full w-[40px] items-center justify-center"><Svg w={14} h={13}><path d="M0.5 0.5H13.5V12.5H0.5ZM0.5 7.5H8.5V0.5M4.5 0.5V7.5" /></Svg></button>
      </div>
      <button aria-label="Zoom out" className="ml-[6px]"><Svg w={8} h={8}><path d="M0 4.5H8" /></Svg></button>
      <input aria-label="Zoom" type="range" defaultValue="50" className="mx-[5px] h-3 w-[100px] appearance-none bg-[linear-gradient(#ababab,#ababab)] bg-[length:100%_1px] bg-center bg-no-repeat [&::-webkit-slider-thumb]:h-3 [&::-webkit-slider-thumb]:w-[5px] [&::-webkit-slider-thumb]:appearance-none [&::-webkit-slider-thumb]:bg-[#666]" />
      <button aria-label="Zoom in"><Svg w={8} h={8}><path d="M0 4.5H8M4.5 0V8" /></Svg></button>
      <span className="ml-[10px] w-[30px] text-right">100%</span>
    </footer>
  )
}

export default function App(){
  return (
    <div className="flex h-screen flex-col overflow-hidden bg-[#f1f1ee] font-['Open_Sans',sans-serif]">
      <TitleBar />
      <RibbonTabs />
      <Ribbon />
      <FormulaBar />
      <main className="flex min-h-0 flex-1 bg-[#e6e6e6]">
        <div className="min-w-0 flex-1 overflow-hidden">
          <Sheet />
        </div>
        <div className="flex w-[21px] flex-col pt-[3px] pr-[3px] pl-[3px]">
          <button aria-label="Scroll up" className="flex h-[15px] items-center justify-center border border-[#ababab] bg-white"><Arrow /></button>
          <div className="flex flex-1 flex-col bg-[#dadada]">
            <div className="h-[74px]" />
            <div className="h-[593px] border border-[#ababab] bg-white" />
          </div>
          <button aria-label="Scroll down" className="flex h-[15px] items-center justify-center border border-[#ababab] bg-white"><Arrow className="rotate-180" /></button>
        </div>
      </main>
      <SheetTabs />
      <StatusBar />
      <div className="flex h-[2px] shrink-0 bg-[#3f3f3f] pl-[245px]"><span className="w-12 bg-[#777]" /></div>
    </div>
  )
}
